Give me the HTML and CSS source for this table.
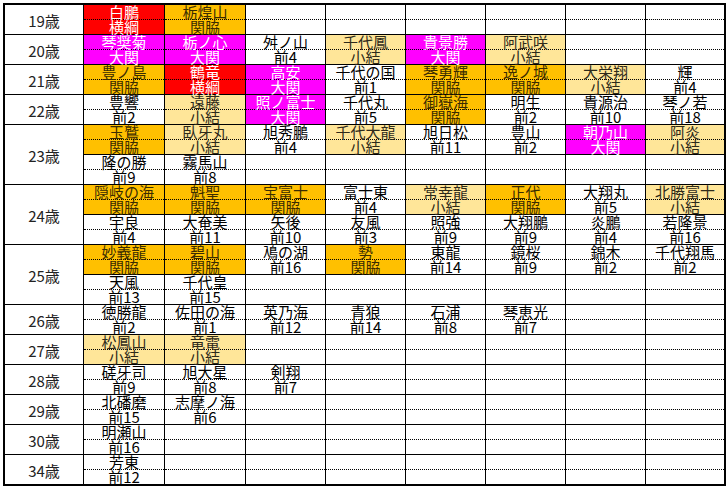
FILE: index.html
```html
<!DOCTYPE html>
<html lang="ja">
<head>
<meta charset="utf-8">
<title>年齢別番付</title>
<link rel="stylesheet" href="styles.css">
</head>
<body>
<div class="sheet">
  <!-- 19 -->
  <div class="age">19歳</div>
  <div class="c"><div class="p yk"><div class="n">白鵬</div><div class="r">横綱</div></div></div>
  <div class="c"><div class="p sk"><div class="n">栃煌山</div><div class="r">関脇</div></div></div>
  <div class="c"><div class="p"><div class="n"></div><div class="r"></div></div></div>
  <div class="c"><div class="p"><div class="n"></div><div class="r"></div></div></div>
  <div class="c"><div class="p"><div class="n"></div><div class="r"></div></div></div>
  <div class="c"><div class="p"><div class="n"></div><div class="r"></div></div></div>
  <div class="c"><div class="p"><div class="n"></div><div class="r"></div></div></div>
  <div class="c"><div class="p"><div class="n"></div><div class="r"></div></div></div>
  <!-- 20 -->
  <div class="age">20歳</div>
  <div class="c"><div class="p oz"><div class="n">琴奨菊</div><div class="r">大関</div></div></div>
  <div class="c"><div class="p oz"><div class="n">栃ノ心</div><div class="r">大関</div></div></div>
  <div class="c"><div class="p"><div class="n">舛ノ山</div><div class="r">前4</div></div></div>
  <div class="c"><div class="p ko"><div class="n">千代鳳</div><div class="r">小結</div></div></div>
  <div class="c"><div class="p oz"><div class="n">貴景勝</div><div class="r">大関</div></div></div>
  <div class="c"><div class="p ko"><div class="n">阿武咲</div><div class="r">小結</div></div></div>
  <div class="c"><div class="p"><div class="n"></div><div class="r"></div></div></div>
  <div class="c"><div class="p"><div class="n"></div><div class="r"></div></div></div>
  <!-- 21 -->
  <div class="age">21歳</div>
  <div class="c"><div class="p sk"><div class="n">豊ノ島</div><div class="r">関脇</div></div></div>
  <div class="c"><div class="p yk"><div class="n">鶴竜</div><div class="r">横綱</div></div></div>
  <div class="c"><div class="p oz"><div class="n">高安</div><div class="r">大関</div></div></div>
  <div class="c"><div class="p"><div class="n">千代の国</div><div class="r">前1</div></div></div>
  <div class="c"><div class="p sk"><div class="n">琴勇輝</div><div class="r">関脇</div></div></div>
  <div class="c"><div class="p sk"><div class="n">逸ノ城</div><div class="r">関脇</div></div></div>
  <div class="c"><div class="p ko"><div class="n">大栄翔</div><div class="r">小結</div></div></div>
  <div class="c"><div class="p"><div class="n">輝</div><div class="r">前4</div></div></div>
  <!-- 22 -->
  <div class="age">22歳</div>
  <div class="c"><div class="p"><div class="n">豊響</div><div class="r">前2</div></div></div>
  <div class="c"><div class="p ko"><div class="n">遠藤</div><div class="r">小結</div></div></div>
  <div class="c"><div class="p oz"><div class="n">照ノ富士</div><div class="r">大関</div></div></div>
  <div class="c"><div class="p"><div class="n">千代丸</div><div class="r">前5</div></div></div>
  <div class="c"><div class="p sk"><div class="n">御嶽海</div><div class="r">関脇</div></div></div>
  <div class="c"><div class="p"><div class="n">明生</div><div class="r">前2</div></div></div>
  <div class="c"><div class="p"><div class="n">貴源治</div><div class="r">前10</div></div></div>
  <div class="c"><div class="p"><div class="n">琴ノ若</div><div class="r">前18</div></div></div>
  <!-- 23 -->
  <div class="age">23歳</div>
  <div class="c"><div class="p sk"><div class="n">玉鷲</div><div class="r">関脇</div></div><div class="p"><div class="n">隆の勝</div><div class="r">前9</div></div></div>
  <div class="c"><div class="p ko"><div class="n">臥牙丸</div><div class="r">小結</div></div><div class="p"><div class="n">霧馬山</div><div class="r">前8</div></div></div>
  <div class="c"><div class="p"><div class="n">旭秀鵬</div><div class="r">前4</div></div><div class="p"><div class="n"></div><div class="r"></div></div></div>
  <div class="c"><div class="p ko"><div class="n">千代大龍</div><div class="r">小結</div></div><div class="p"><div class="n"></div><div class="r"></div></div></div>
  <div class="c"><div class="p"><div class="n">旭日松</div><div class="r">前11</div></div><div class="p"><div class="n"></div><div class="r"></div></div></div>
  <div class="c"><div class="p"><div class="n">豊山</div><div class="r">前2</div></div><div class="p"><div class="n"></div><div class="r"></div></div></div>
  <div class="c"><div class="p oz"><div class="n">朝乃山</div><div class="r">大関</div></div><div class="p"><div class="n"></div><div class="r"></div></div></div>
  <div class="c"><div class="p ko"><div class="n">阿炎</div><div class="r">小結</div></div><div class="p"><div class="n"></div><div class="r"></div></div></div>
  <!-- 24 -->
  <div class="age">24歳</div>
  <div class="c"><div class="p sk"><div class="n">隠岐の海</div><div class="r">関脇</div></div><div class="p"><div class="n">宇良</div><div class="r">前4</div></div></div>
  <div class="c"><div class="p sk"><div class="n">魁聖</div><div class="r">関脇</div></div><div class="p"><div class="n">大奄美</div><div class="r">前11</div></div></div>
  <div class="c"><div class="p sk"><div class="n">宝富士</div><div class="r">関脇</div></div><div class="p"><div class="n">矢後</div><div class="r">前10</div></div></div>
  <div class="c"><div class="p"><div class="n">富士東</div><div class="r">前4</div></div><div class="p"><div class="n">友風</div><div class="r">前3</div></div></div>
  <div class="c"><div class="p ko"><div class="n">常幸龍</div><div class="r">小結</div></div><div class="p"><div class="n">照強</div><div class="r">前9</div></div></div>
  <div class="c"><div class="p sk"><div class="n">正代</div><div class="r">関脇</div></div><div class="p"><div class="n">大翔鵬</div><div class="r">前9</div></div></div>
  <div class="c"><div class="p"><div class="n">大翔丸</div><div class="r">前5</div></div><div class="p"><div class="n">炎鵬</div><div class="r">前4</div></div></div>
  <div class="c"><div class="p ko"><div class="n">北勝富士</div><div class="r">小結</div></div><div class="p"><div class="n">若隆景</div><div class="r">前16</div></div></div>
  <!-- 25 -->
  <div class="age">25歳</div>
  <div class="c"><div class="p sk"><div class="n">妙義龍</div><div class="r">関脇</div></div><div class="p"><div class="n">天風</div><div class="r">前13</div></div></div>
  <div class="c"><div class="p sk"><div class="n">碧山</div><div class="r">関脇</div></div><div class="p"><div class="n">千代皇</div><div class="r">前15</div></div></div>
  <div class="c"><div class="p"><div class="n">鳰の湖</div><div class="r">前16</div></div><div class="p"><div class="n"></div><div class="r"></div></div></div>
  <div class="c"><div class="p sk"><div class="n">勢</div><div class="r">関脇</div></div><div class="p"><div class="n"></div><div class="r"></div></div></div>
  <div class="c"><div class="p"><div class="n">東龍</div><div class="r">前14</div></div><div class="p"><div class="n"></div><div class="r"></div></div></div>
  <div class="c"><div class="p"><div class="n">鏡桜</div><div class="r">前9</div></div><div class="p"><div class="n"></div><div class="r"></div></div></div>
  <div class="c"><div class="p"><div class="n">錦木</div><div class="r">前2</div></div><div class="p"><div class="n"></div><div class="r"></div></div></div>
  <div class="c"><div class="p"><div class="n">千代翔馬</div><div class="r">前2</div></div><div class="p"><div class="n"></div><div class="r"></div></div></div>
  <!-- 26 -->
  <div class="age">26歳</div>
  <div class="c"><div class="p"><div class="n">徳勝龍</div><div class="r">前2</div></div></div>
  <div class="c"><div class="p"><div class="n">佐田の海</div><div class="r">前1</div></div></div>
  <div class="c"><div class="p"><div class="n">英乃海</div><div class="r">前12</div></div></div>
  <div class="c"><div class="p"><div class="n">青狼</div><div class="r">前14</div></div></div>
  <div class="c"><div class="p"><div class="n">石浦</div><div class="r">前8</div></div></div>
  <div class="c"><div class="p"><div class="n">琴恵光</div><div class="r">前7</div></div></div>
  <div class="c"><div class="p"><div class="n"></div><div class="r"></div></div></div>
  <div class="c"><div class="p"><div class="n"></div><div class="r"></div></div></div>
  <!-- 27 -->
  <div class="age">27歳</div>
  <div class="c"><div class="p ko"><div class="n">松鳳山</div><div class="r">小結</div></div></div>
  <div class="c"><div class="p ko"><div class="n">竜電</div><div class="r">小結</div></div></div>
  <div class="c"><div class="p"><div class="n"></div><div class="r"></div></div></div>
  <div class="c"><div class="p"><div class="n"></div><div class="r"></div></div></div>
  <div class="c"><div class="p"><div class="n"></div><div class="r"></div></div></div>
  <div class="c"><div class="p"><div class="n"></div><div class="r"></div></div></div>
  <div class="c"><div class="p"><div class="n"></div><div class="r"></div></div></div>
  <div class="c"><div class="p"><div class="n"></div><div class="r"></div></div></div>
  <!-- 28 -->
  <div class="age">28歳</div>
  <div class="c"><div class="p"><div class="n">磋牙司</div><div class="r">前9</div></div></div>
  <div class="c"><div class="p"><div class="n">旭大星</div><div class="r">前8</div></div></div>
  <div class="c"><div class="p"><div class="n">剣翔</div><div class="r">前7</div></div></div>
  <div class="c"><div class="p"><div class="n"></div><div class="r"></div></div></div>
  <div class="c"><div class="p"><div class="n"></div><div class="r"></div></div></div>
  <div class="c"><div class="p"><div class="n"></div><div class="r"></div></div></div>
  <div class="c"><div class="p"><div class="n"></div><div class="r"></div></div></div>
  <div class="c"><div class="p"><div class="n"></div><div class="r"></div></div></div>
  <!-- 29 -->
  <div class="age">29歳</div>
  <div class="c"><div class="p"><div class="n">北磻磨</div><div class="r">前15</div></div></div>
  <div class="c"><div class="p"><div class="n">志摩ノ海</div><div class="r">前6</div></div></div>
  <div class="c"><div class="p"><div class="n"></div><div class="r"></div></div></div>
  <div class="c"><div class="p"><div class="n"></div><div class="r"></div></div></div>
  <div class="c"><div class="p"><div class="n"></div><div class="r"></div></div></div>
  <div class="c"><div class="p"><div class="n"></div><div class="r"></div></div></div>
  <div class="c"><div class="p"><div class="n"></div><div class="r"></div></div></div>
  <div class="c"><div class="p"><div class="n"></div><div class="r"></div></div></div>
  <!-- 30 -->
  <div class="age">30歳</div>
  <div class="c"><div class="p"><div class="n">明瀬山</div><div class="r">前16</div></div></div>
  <div class="c"><div class="p"><div class="n"></div><div class="r"></div></div></div>
  <div class="c"><div class="p"><div class="n"></div><div class="r"></div></div></div>
  <div class="c"><div class="p"><div class="n"></div><div class="r"></div></div></div>
  <div class="c"><div class="p"><div class="n"></div><div class="r"></div></div></div>
  <div class="c"><div class="p"><div class="n"></div><div class="r"></div></div></div>
  <div class="c"><div class="p"><div class="n"></div><div class="r"></div></div></div>
  <div class="c"><div class="p"><div class="n"></div><div class="r"></div></div></div>
  <!-- 34 -->
  <div class="age last">34歳</div>
  <div class="c last"><div class="p"><div class="n">芳東</div><div class="r">前12</div></div></div>
  <div class="c last"><div class="p"><div class="n"></div><div class="r"></div></div></div>
  <div class="c last"><div class="p"><div class="n"></div><div class="r"></div></div></div>
  <div class="c last"><div class="p"><div class="n"></div><div class="r"></div></div></div>
  <div class="c last"><div class="p"><div class="n"></div><div class="r"></div></div></div>
  <div class="c last"><div class="p"><div class="n"></div><div class="r"></div></div></div>
  <div class="c last"><div class="p"><div class="n"></div><div class="r"></div></div></div>
  <div class="c last"><div class="p"><div class="n"></div><div class="r"></div></div></div>
</div>
</body>
</html>
```
FILE: styles.css
```css
html, body {
  margin: 0;
  padding: 0;
  background: #fff;
}
body {
  font-family: "Noto Sans CJK JP", "Noto Sans", sans-serif;
  color: #000;
}
.sheet {
  margin: 3px 0 0 3px;
  width: 719px;
  border: 2px solid #000;
  display: grid;
  grid-template-columns: 79px 81px 81px 80px 80px 80px 80px 80px 78px;
}
.sheet > * {
  box-sizing: border-box;
  border-right: 1px solid #000;
}
.sheet > :nth-child(9n) {
  border-right: none;
}
.age {
  border-bottom: 1px solid #000;
  display: flex;
  align-items: center;
  justify-content: center;
  font-size: 15px;
  color: #222;
  padding-top: 2px;
}
.age.last {
  border-bottom: none;
}
.p {
  display: flex;
  flex-direction: column;
}
.n, .r {
  box-sizing: border-box;
  height: 15px;
  font-size: 15px;
  line-height: 14px;
  text-align: center;
  white-space: nowrap;
}
.n {
  border-bottom: 1px dotted #000;
}
.r {
  border-bottom: 1px solid #000;
}
.c.last .p:last-child .r {
  border-bottom: none;
  height: 14px;
}
.yk { background: #ff0000; color: #fff; }
.oz { background: #ff00ff; color: #fff; }
.sk { background: #ffc000; color: #3a2c00; }
.ko { background: #ffe699; color: #2e2a1a; }
```
